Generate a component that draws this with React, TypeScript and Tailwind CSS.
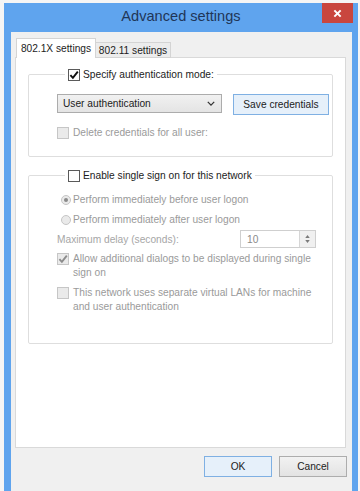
import React from "react";

function CheckBox({ checked, disabled }: { checked?: boolean; disabled?: boolean }) {
  return (
    <span
      className={`w-[12px] h-[12px] shrink-0 border flex items-center justify-center ${
        disabled ? "border-[#c6c6c6] bg-[#eaeaea]" : "border-[#5a5a5a] bg-white"
      }`}
    >
      {checked && (
        <svg viewBox="0 0 10 10" className="w-[10px] h-[10px]">
          <path
            d="M1.4 5.2 L3.9 7.9 L8.8 1.6"
            fill="none"
            stroke={disabled ? "#8c8c8c" : "#111111"}
            strokeWidth="1.9"
          />
        </svg>
      )}
    </span>
  );
}

function Radio({ selected }: { selected?: boolean }) {
  return (
    <span className="w-[10px] h-[10px] shrink-0 rounded-full border border-[#c6c6c6] bg-[#eaeaea] flex items-center justify-center">
      {selected && <span className="w-[4px] h-[4px] rounded-full bg-[#8a8a8a]" />}
    </span>
  );
}

function Button({ label, blue }: { label: string; blue?: boolean }) {
  return (
    <div
      className={`h-[21px] flex items-center justify-center border text-[#1c1c1c] ${
        blue
          ? "border-[#7fb0e3] bg-[#e6f0fa]"
          : "border-[#adadad] bg-gradient-to-b from-[#f2f2f2] to-[#e3e3e3]"
      }`}
    >
      {label}
    </div>
  );
}

export default function App() {
  return (
    <div className="w-[360px] h-[491px] bg-[#f5f5f5] pl-[4px] pt-[3px] overflow-hidden font-['Liberation_Sans',Arial,sans-serif] text-[10.2px] leading-[13px]">
      <div className="w-[354px] h-[488px] bg-[#5fa4ee] flex flex-col">
        {/* title bar */}
        <div className="h-[29px] shrink-0 grid grid-cols-[1fr_auto_1fr] items-start">
          <div />
          <div className="pt-[5px] text-[14.6px] leading-[17px] text-[#1f3657]">Advanced settings</div>
          <div className="justify-self-end mr-[5px] w-[31px] h-[20px] bg-[#c9463e] flex items-center justify-center">
            <svg viewBox="0 0 10 10" className="w-[9px] h-[9px]">
              <path d="M1.5 1.5 L8.5 8.5 M8.5 1.5 L1.5 8.5" stroke="#ffffff" strokeWidth="2.2" />
            </svg>
          </div>
        </div>

        {/* client area */}
        <div className="flex-1 ml-[7px] mr-[6px] bg-[#f0f0f0] pt-[6px] flex flex-col">
          <div className="flex items-end ml-[5px] -mb-[1px] relative z-10">
            <div className="w-[80px] h-[20px] bg-white border border-b-0 border-[#d4d4d4] flex items-center justify-center text-[#1c1c1c]">
              802.1X settings
            </div>
            <div className="w-[75px] h-[16px] bg-[#ececec] border border-l-0 border-[#d4d4d4] flex items-center justify-center text-[#1c1c1c]">
              802.11 settings
            </div>
          </div>

          <div className="ml-[4px] w-[331px] h-[391px] bg-white border border-[#d9d9d9]">
            {/* group 1 */}
            <fieldset className="mx-[12px] mt-[10px] border border-[#dedede] rounded-[2px] pl-[28px] pt-[13px] pb-[17px]">
              <legend className="ml-[8px] px-[3px] flex items-center gap-[3px] text-[#1c1c1c]">
                <CheckBox checked />
                <span>Specify authentication mode:</span>
              </legend>
              <div className="flex items-start gap-[11px]">
                <div className="w-[165px] h-[19px] border border-[#acacac] bg-gradient-to-b from-[#f1f1f1] to-[#e4e4e4] flex items-center justify-between pl-[5px] pr-[6px] text-[#1c1c1c]">
                  <span>User authentication</span>
                  <svg viewBox="0 0 10 6" className="w-[8px] h-[5px]">
                    <path d="M1 1 L5 5 L9 1" fill="none" stroke="#333333" strokeWidth="1.6" />
                  </svg>
                </div>
                <div className="w-[96px]">
                  <Button label="Save credentials" blue />
                </div>
              </div>
              <div className="mt-[11px] flex items-center gap-[4px] text-[#9a9a9a]">
                <CheckBox disabled />
                <span>Delete credentials for all user:</span>
              </div>
            </fieldset>

            {/* group 2 */}
            <fieldset className="mx-[12px] mt-[12px] border border-[#dedede] rounded-[2px] pl-[28px] pr-[16px] pt-[11px] pb-[30px]">
              <legend className="ml-[8px] px-[3px] flex items-center gap-[3px] text-[#1c1c1c]">
                <CheckBox />
                <span>Enable single sign on for this network</span>
              </legend>
              <div className="flex flex-col text-[#9a9a9a]">
                <div className="ml-[4px] flex items-center gap-[2px] h-[13px]">
                  <Radio selected />
                  <span>Perform immediately before user logon</span>
                </div>
                <div className="ml-[4px] mt-[7px] flex items-center gap-[2px] h-[13px]">
                  <Radio />
                  <span>Perform immediately after user logon</span>
                </div>
                <div className="mt-[4px] flex items-center justify-between h-[18px] text-[#a6a6a6]">
                  <span>Maximum delay (seconds):</span>
                  <div className="w-[76px] h-[18px] border border-[#cfcfcf] bg-white flex">
                    <span className="flex-1 pl-[6px] flex items-center text-[#8a8a8a]">10</span>
                    <div className="w-[16px] border-l border-[#d6d6d6] bg-[#f0f0f0] flex flex-col items-center justify-center gap-[2px]">
                      <svg viewBox="0 0 6 4" className="w-[5px] h-[3px]">
                        <path d="M0 4 L3 0 L6 4 Z" fill="#7a7a7a" />
                      </svg>
                      <svg viewBox="0 0 6 4" className="w-[5px] h-[3px]">
                        <path d="M0 0 L6 0 L3 4 Z" fill="#7a7a7a" />
                      </svg>
                    </div>
                  </div>
                </div>
                <div className="mt-[4px] flex items-start gap-[4px] leading-[13.5px]">
                  <span className="mt-[1px]">
                    <CheckBox checked disabled />
                  </span>
                  <span>Allow additional dialogs to be displayed during single sign on</span>
                </div>
                <div className="mt-[7px] flex items-start gap-[4px] leading-[13.5px]">
                  <span className="mt-[1px]">
                    <CheckBox disabled />
                  </span>
                  <span>This network uses separate virtual LANs for machine and user authentication</span>
                </div>
              </div>
            </fieldset>
          </div>

          <div className="mt-[8px] mr-[5px] flex justify-end gap-[7px]">
            <div className="w-[68px]">
              <Button label="OK" blue />
            </div>
            <div className="w-[68px]">
              <Button label="Cancel" />
            </div>
          </div>
        </div>
      </div>
    </div>
  );
}
